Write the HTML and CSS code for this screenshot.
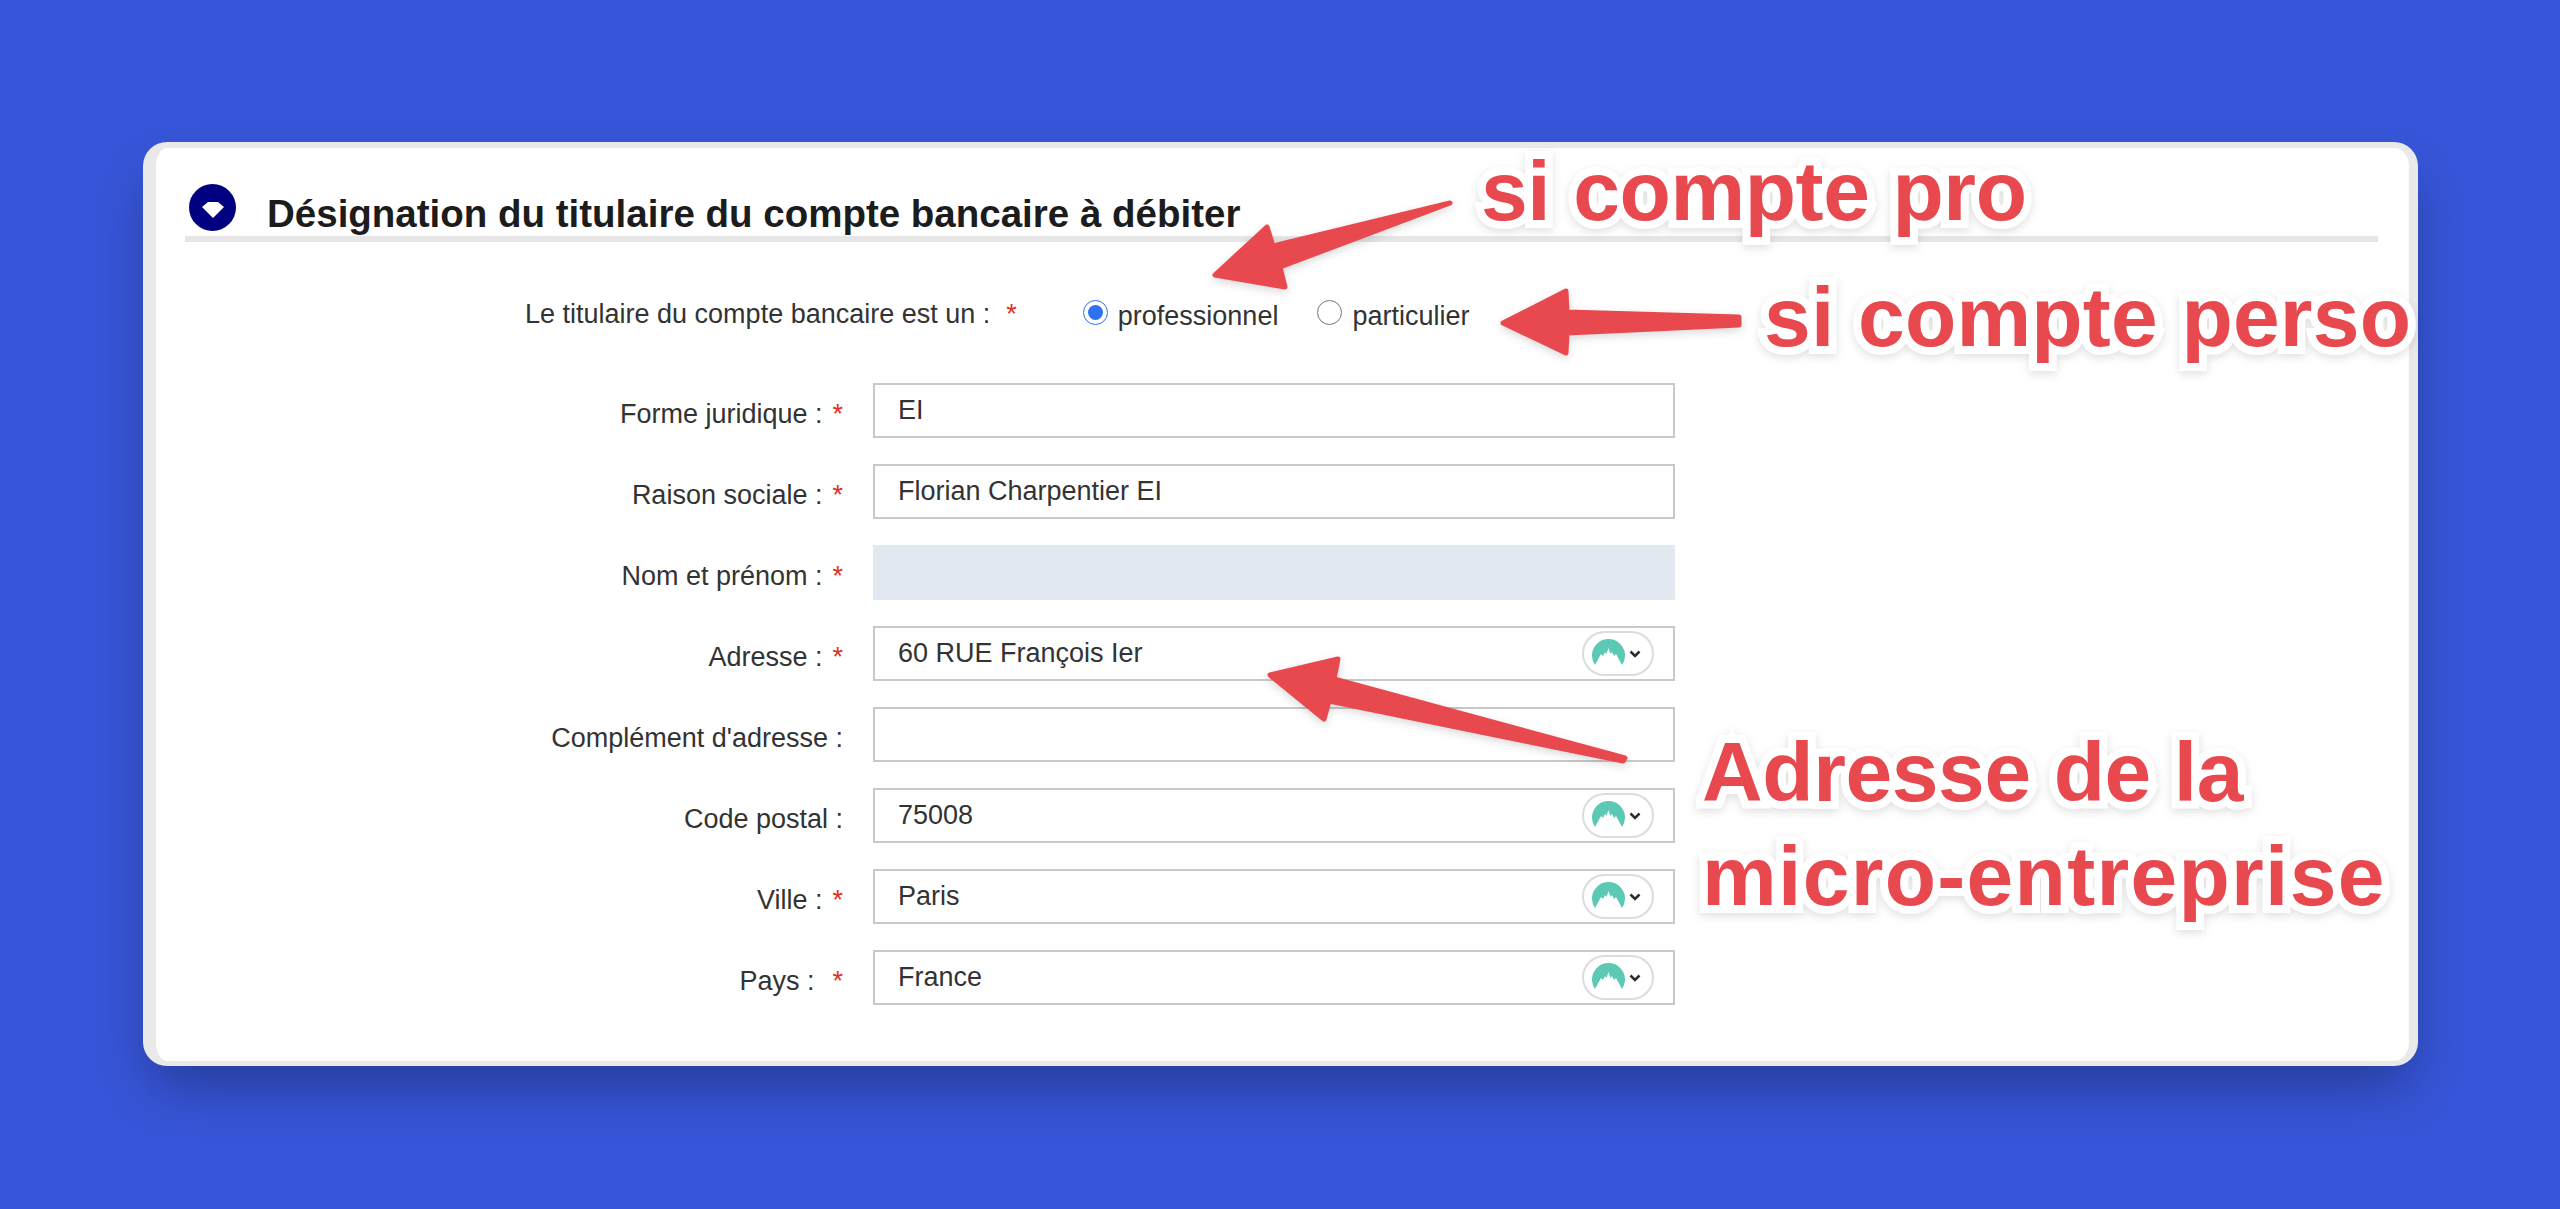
FILE: index.html
```html
<!DOCTYPE html>
<html lang="fr">
<head>
  <meta charset="UTF-8" />
  <title>Désignation du titulaire</title>
  <link rel="stylesheet" href="styles.css">
</head>
<body>
  <svg class="defs" width="0" height="0">
    <symbol id="nord" viewBox="0 0 33 26">
      <path fill="#5cc9b4" d="M3 26A16.500 16.500 0 1 1 30 26L24 15 22 17 20 13 18.500 15 16.500 9 14.500 15 13 13 11 17 9 15Z"/>
    </symbol>
  </svg>

  <div class="card">
    <div class="title-row">
      <svg class="title-icon" viewBox="0 0 47 47">
        <circle cx="23.500" cy="23.500" r="23.500" fill="#000080"/>
        <path fill="#fff" d="M19 18h10l6 5-11 11-11-11z"/>
      </svg>
      <h2>Désignation du titulaire du compte bancaire à débiter</h2>
    </div>

    <div class="holder-row">
      <span class="holder-label">Le titulaire du compte bancaire est un :</span>
      <span class="star">*</span>
      <label class="radio first"><input type="radio" name="holder" checked> professionnel</label>
      <label class="radio"><input type="radio" name="holder"> particulier</label>
    </div>

    <div class="fields">
      <label class="field-label">Forme juridique :<span class="star">*</span></label>
      <div class="input-wrap"><input type="text" value="EI"></div>

      <label class="field-label">Raison sociale :<span class="star">*</span></label>
      <div class="input-wrap"><input type="text" value="Florian Charpentier EI"></div>

      <label class="field-label">Nom et prénom :<span class="star">*</span></label>
      <div class="input-wrap"><input class="disabled" type="text" disabled></div>

      <label class="field-label">Adresse :<span class="star">*</span></label>
      <div class="input-wrap">
        <input type="text" value="60 RUE François Ier">
        <div class="nord-pill"><svg class="nord-logo"><use href="#nord"/></svg><svg class="nord-chev" viewBox="0 0 12 8"><path d="M1.500 1.500 6 6l4.500-4.500"/></svg></div>
      </div>

      <label class="field-label no-star">Complément d'adresse :</label>
      <div class="input-wrap"><input type="text"></div>

      <label class="field-label no-star">Code postal :</label>
      <div class="input-wrap">
        <input type="text" value="75008">
        <div class="nord-pill"><svg class="nord-logo"><use href="#nord"/></svg><svg class="nord-chev" viewBox="0 0 12 8"><path d="M1.500 1.500 6 6l4.500-4.500"/></svg></div>
      </div>

      <label class="field-label">Ville :<span class="star">*</span></label>
      <div class="input-wrap">
        <input type="text" value="Paris">
        <div class="nord-pill"><svg class="nord-logo"><use href="#nord"/></svg><svg class="nord-chev" viewBox="0 0 12 8"><path d="M1.500 1.500 6 6l4.500-4.500"/></svg></div>
      </div>

      <label class="field-label">Pays :<span class="star wide">*</span></label>
      <div class="input-wrap">
        <input type="text" value="France">
        <div class="nord-pill"><svg class="nord-logo"><use href="#nord"/></svg><svg class="nord-chev" viewBox="0 0 12 8"><path d="M1.500 1.500 6 6l4.500-4.500"/></svg></div>
      </div>
    </div>
  </div>

  <!-- red annotations drawn on top of the form -->
  <svg class="arrows" viewBox="0 0 2560 1209">
    <path d="M1450 203 1273 246 1267 227 1215 275 1285 287 1280 267Z"/>
    <path d="M1739 317 1567 312 1566 291 1503 323 1566 353 1567 333 1739 325Z"/>
    <path d="M1625 758 1334 679 1338 659 1270 675 1324 719 1329 701 1623 761Z"/>
  </svg>
  <div class="note note-pro">si compte pro</div>
  <div class="note note-perso">si compte perso</div>
  <div class="note note-address">Adresse de la<br><span class="note-wide">micro-entreprise</span></div>
</body>
</html>
```

FILE: styles.css
```css
* {
  box-sizing: border-box;
}

html, body {
  margin: 0;
  height: 1209px;
  overflow: hidden;
}

body {
  position: relative;
  background: #3755d8;
  font-family: "Liberation Sans", Arial, sans-serif;
  color: #333;
  padding: 142px 142px 0 143px;
}

.defs {
  position: absolute;
}

.card {
  height: 924px;
  background: #fff;
  border-style: solid;
  border-color: #e9e9e9;
  border-width: 6px 9px 5px 13px;
  border-radius: 24px;
  box-shadow: 0 28px 56px -10px rgba(0, 0, 0, 0.32);
  padding: 36px 31px 0 29px;
}

.title-row {
  display: flex;
  align-items: flex-start;
  height: 58px;
  padding-left: 4px;
  border-bottom: 6px solid #e6e6e6;
}

.title-icon {
  width: 47px;
  height: 47px;
  flex: none;
}

h2 {
  margin: 0 0 0 31px;
  padding-top: 8px;
  font-size: 38.500px;
  line-height: 44px;
  font-weight: bold;
  color: #1c1c1c;
  white-space: nowrap;
}

.holder-row {
  display: flex;
  align-items: center;
  height: 34px;
  margin-top: 55px;
  padding-left: 340px;
  font-size: 27px;
}

.star {
  color: #e0301e;
  margin-left: 10px;
}

.holder-row .star {
  margin-left: 16px;
}

.radio {
  display: flex;
  align-items: center;
  gap: 10px;
  margin-left: 39px;
  padding-top: 4px;
}

.radio.first {
  margin-left: 66px;
}

.radio input {
  width: 25px;
  height: 25px;
  margin: 0 0 8px;
  accent-color: #2f72f0;
}

.fields {
  display: grid;
  grid-template-columns: 688px 802px;
  grid-auto-rows: 55px;
  row-gap: 26px;
  margin-top: 52px;
  font-size: 27px;
}

.field-label {
  display: flex;
  align-items: center;
  justify-content: flex-end;
  padding: 7px 30px 0 0;
  white-space: pre;
}

.star.wide {
  margin-left: 18px;
}

.input-wrap {
  position: relative;
}

.input-wrap input {
  width: 100%;
  height: 100%;
  border: 2px solid #c9c9c9;
  border-radius: 0;
  padding: 0 23px;
  margin: 0;
  font: inherit;
  color: #333;
  background: #fff;
  outline: none;
}

.input-wrap input.disabled {
  background: #e1e8f0;
  border-color: #e1e8f0;
}

/* password manager badge sitting inside the input */
.nord-pill {
  position: absolute;
  top: 5px;
  right: 21px;
  width: 72px;
  height: 45px;
  display: flex;
  align-items: center;
  padding: 0 0 0 8px;
  background: #fff;
  border: 2px solid #dcdcdc;
  border-radius: 23px;
}

.nord-logo {
  width: 33px;
  height: 26px;
  margin-bottom: 4px;
  flex: none;
}

.nord-chev {
  width: 12px;
  height: 8px;
  margin-left: 4px;
  flex: none;
}

.nord-chev path {
  fill: none;
  stroke: #2b2b33;
  stroke-width: 2.500;
}

.arrows {
  position: absolute;
  top: 0;
  left: 0;
  width: 2560px;
  height: 1209px;
  fill: #e8494e;
  stroke: #e8494e;
  stroke-width: 5px;
  stroke-linejoin: round;
  filter: drop-shadow(0 3px 4px rgba(0, 0, 0, 0.15));
}

.note {
  position: absolute;
  font-size: 84px;
  line-height: 104px;
  font-weight: bold;
  color: #e8494e;
  white-space: nowrap;
  -webkit-text-stroke: 16px #fff;
  paint-order: stroke fill;
  filter: drop-shadow(0 3px 4px rgba(0, 0, 0, 0.12));
}

.note-pro {
  left: 1481px;
  top: 139px;
  letter-spacing: -0.400px;
}

.note-perso {
  left: 1764px;
  top: 265px;
  letter-spacing: 0.200px;
}

.note-address {
  left: 1702px;
  top: 720px;
  letter-spacing: -0.400px;
}

.note-wide {
  letter-spacing: 1.300px;
}
```
